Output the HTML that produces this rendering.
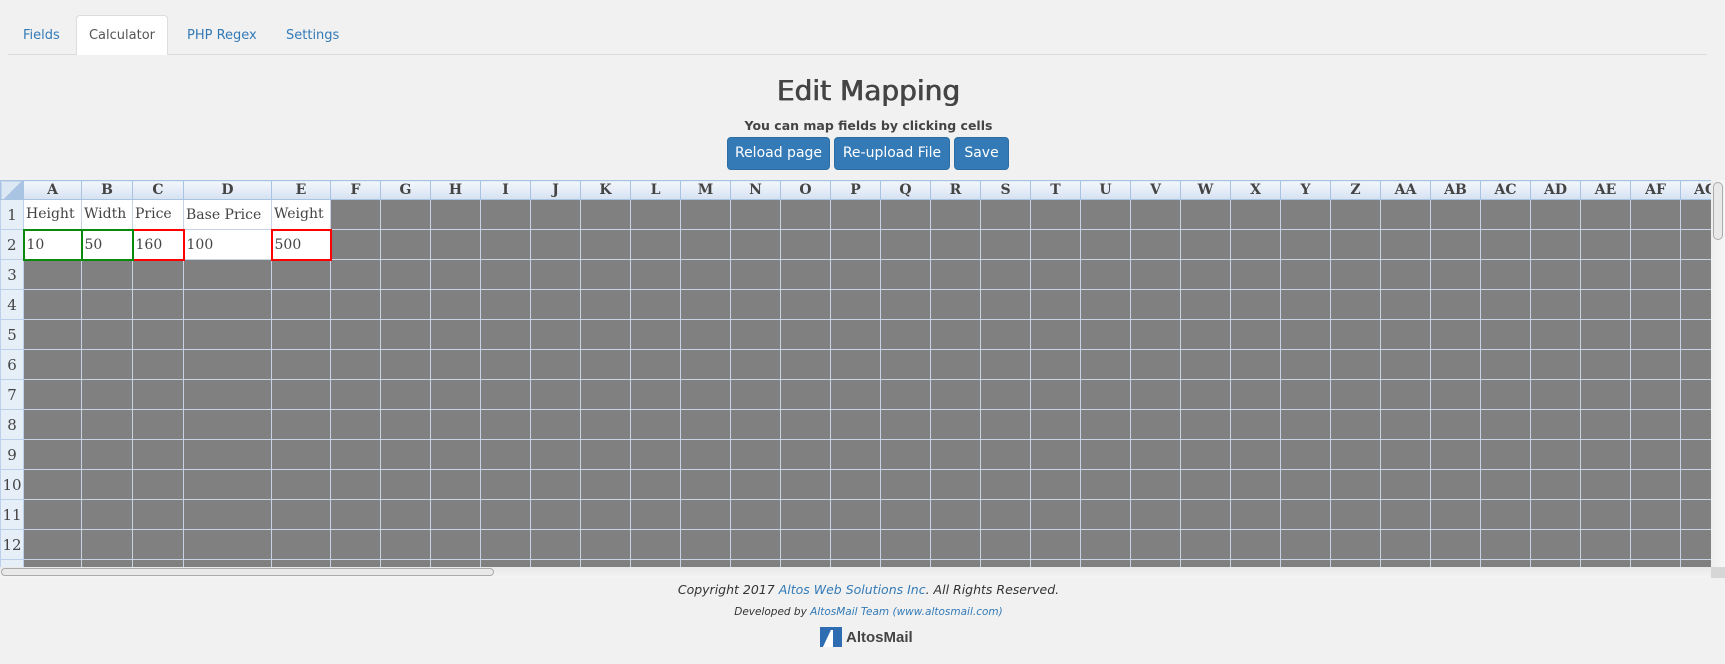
<!DOCTYPE html>
<html><head><meta charset="utf-8"><style>
*{box-sizing:border-box;margin:0;padding:0}
body{width:1725px;height:664px;background:#f1f1f1;font-family:"DejaVu Sans","Liberation Sans",sans-serif;position:relative;overflow:hidden;color:#333}
.tabline{position:absolute;left:8px;right:18px;top:54px;border-top:1px solid #ddd}
.tab{position:absolute;top:28px;font-size:13px;color:#337ab7}
.tab.act{top:15px;left:76px;width:92px;height:40px;background:#fff;border:1px solid #ddd;border-bottom:none;border-radius:4px 4px 0 0;color:#555;text-align:center;line-height:39px;padding:0}
h1{position:absolute;left:0;width:1737px;text-align:center;top:74px;font-size:28px;font-weight:normal;color:#444;text-shadow:0.5px 0 0 #444,-0.3px 0 0 #444}
.sub{position:absolute;left:0;width:1737px;text-align:center;top:118px;font-size:12.5px;font-weight:bold;color:#444}
.btn{position:absolute;top:137px;height:33px;background:#337ab7;border:1px solid #2e6da4;border-radius:4px;color:#fff;font-size:14px;line-height:31px;text-align:center}
.grid{position:absolute;left:0;top:180px;width:1711px;height:387px;overflow:hidden;background:#808080}
table{border-collapse:collapse;table-layout:fixed;font-family:"DejaVu Serif","Liberation Serif",serif}
td{border:1px solid #c9d2e4;height:30px;padding:0 2px;font-size:14px;color:#444;white-space:nowrap;overflow:hidden}
tr.h td{height:19px;background:linear-gradient(#f2f6fb,#d6e2f2);border-color:#a9c3e3;text-align:center;font-weight:bold;font-size:14px;line-height:17px}
td.rh{background:#e6eef8;border-color:#bcd0ea;text-align:center;padding:0;font-size:15px}
td.w{background:#fff}
td.g{border:2px solid #0a8a0a;background:#fff}
td.r{border:2px solid #f00;background:#fff}
.hs{position:absolute;left:0;top:567px;width:1711px;height:11px;background:linear-gradient(#e8e8e8,#f4f4f4)}
.hs div{position:absolute;left:1px;top:1px;width:493px;height:8px;border:1px solid #aaa;border-radius:5px;background:#e9e9e9}
.vs{position:absolute;left:1711px;top:180px;width:14px;height:387px;background:linear-gradient(90deg,#eee,#f6f6f6)}
.vs div{position:absolute;left:2px;top:2px;width:10px;height:58px;border:1px solid #aaa;border-radius:5px;background:#e9e9e9}
.corner{position:absolute;left:1711px;top:567px;width:14px;height:11px;background:#d6d6d6}
.f1{position:absolute;left:0;width:1737px;text-align:center;top:582px;font-size:12.5px;font-style:italic;color:#333}
.f2{position:absolute;left:0;width:1737px;text-align:center;top:606px;font-size:10.5px;font-style:italic;color:#333}
a{color:#337ab7;text-decoration:none}
.logo{position:absolute;left:820px;top:627px;height:20px;display:flex;align-items:center;font-family:"Liberation Sans",sans-serif;font-weight:bold;font-size:15px;color:#444}
</style></head><body>
<div class="tabline"></div>
<div class="tab" style="left:23px">Fields</div>
<div class="tab act">Calculator</div>
<div class="tab" style="left:187px">PHP Regex</div>
<div class="tab" style="left:286px">Settings</div>
<h1>Edit Mapping</h1>
<div class="sub">You can map fields by clicking cells</div>
<div class="btn" style="left:727px;width:103px">Reload page</div>
<div class="btn" style="left:834px;width:116px">Re-upload File</div>
<div class="btn" style="left:954px;width:55px">Save</div>
<div class="grid"><table id="t">
<colgroup><col style="width:23px"><col style="width:58px"><col style="width:51px"><col style="width:51px"><col style="width:88px"><col style="width:59px">
</colgroup>
<tr class="h"><td style="background:linear-gradient(135deg,#dde8f5 50%,#a9c3e3 50%)"></td><td>A</td><td>B</td><td>C</td><td>D</td><td>E</td><td>F</td><td>G</td><td>H</td><td>I</td><td>J</td><td>K</td><td>L</td><td>M</td><td>N</td><td>O</td><td>P</td><td>Q</td><td>R</td><td>S</td><td>T</td><td>U</td><td>V</td><td>W</td><td>X</td><td>Y</td><td>Z</td><td>AA</td><td>AB</td><td>AC</td><td>AD</td><td>AE</td><td>AF</td><td>AG</td></tr>
<tr><td class="rh">1</td><td class="w">Height</td><td class="w">Width</td><td class="w">Price</td><td class="w">Base Price</td><td class="w">Weight</td><td></td><td></td><td></td><td></td><td></td><td></td><td></td><td></td><td></td><td></td><td></td><td></td><td></td><td></td><td></td><td></td><td></td><td></td><td></td><td></td><td></td><td></td><td></td><td></td><td></td><td></td><td></td><td></td></tr>
<tr><td class="rh">2</td><td class="g">10</td><td class="g">50</td><td class="r">160</td><td class="w">100</td><td class="r">500</td><td></td><td></td><td></td><td></td><td></td><td></td><td></td><td></td><td></td><td></td><td></td><td></td><td></td><td></td><td></td><td></td><td></td><td></td><td></td><td></td><td></td><td></td><td></td><td></td><td></td><td></td><td></td><td></td></tr>
</table></div>
<div class="hs"><div></div></div>
<div class="vs"><div></div></div>
<div class="corner"></div>
<div class="f1">Copyright 2017 <a>Altos Web Solutions Inc</a>. All Rights Reserved.</div>
<div class="f2">Developed by <a>AltosMail Team (www.altosmail.com)</a></div>
<div class="logo"><svg width="22" height="20" viewBox="0 0 22 20"><rect width="22" height="20" fill="#2f6db3"/><path d="M3 20 L11 3 L13 3 L13 20 Z" fill="#fff"/><path d="M11 3 L13 3 L6 20 L3 20Z" fill="#fff"/></svg><span style="margin-left:4px">AltosMail</span></div>
<script>
var t=document.getElementById('t');
var cg=t.querySelector('colgroup');
for(var i=0;i<28;i++){var c=document.createElement('col');c.style.width='50px';cg.appendChild(c);}
t.style.width=(23+58+51+51+88+59+28*50)+'px';
for(var r=3;r<=13;r++){var tr=document.createElement('tr');var h='<td class="rh">'+r+'</td>';for(var c=0;c<33;c++)h+='<td></td>';tr.innerHTML=h;t.appendChild(tr);}
</script>
</body></html>
